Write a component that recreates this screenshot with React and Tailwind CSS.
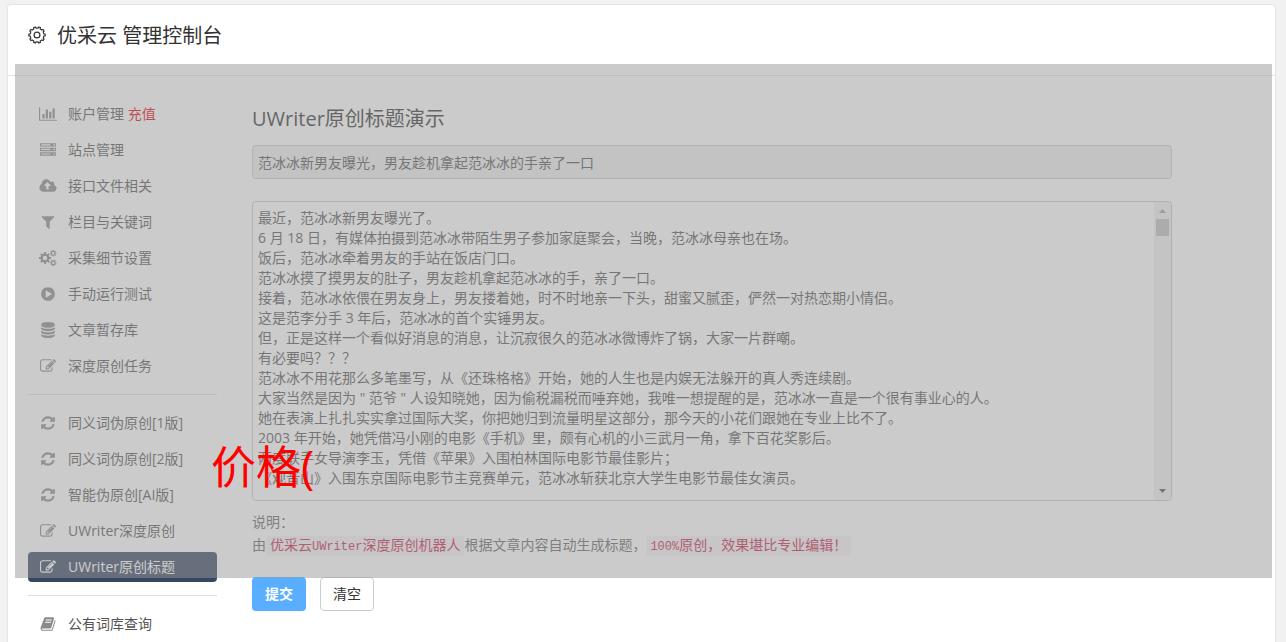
const ICONS = {
  chart: ["0 0 2048 1792", "M640 896v512h-256v-512h256zM1024 384v1024h-256v-1024h256zM2048 1536v128h-2048v-1536h128v1408h1920zM1408 640v768h-256v-768h256zM1792 256v1152h-256v-1152h256z"],
  server: ["0 0 1792 1792", "M128 1408h1024v-128h-1024v128zm0-512h1024v-128h-1024v128zm1568 448q0-40-28-68t-68-28-68 28-28 68 28 68 68 28 68-28 28-68zm-1568-960h1024v-128h-1024v128zm1568 448q0-40-28-68t-68-28-68 28-28 68 28 68 68 28 68-28 28-68zm0-512q0-40-28-68t-68-28-68 28-28 68 28 68 68 28 68-28 28-68zm96 832v384h-1792v-384h1792zm0-512v384h-1792v-384h1792zm0-512v384h-1792v-384h1792z"],
  cloud: ["-64 0 1920 1792", "M1216 864q0-14-9-23l-352-352q-9-9-23-9t-23 9l-351 351q-10 12-10 24 0 14 9 23t23 9h224v352q0 13 9.5 22.5t22.5 9.5h192q13 0 22.5-9.5t9.5-22.5v-352h224q13 0 22.5-9.5t9.5-22.5zm640 288q0 159-112.5 271.5t-271.5 112.5h-1088q-185 0-316.5-131.5t-131.5-316.5q0-130 70-240t188-165q-2-30-2-43 0-212 150-362t362-150q156 0 285.5 87t188.5 231q71-62 166-62 106 0 181 75t75 181q0 76-41 138 130 31 213.5 135.5t83.5 238.5z"],
  filter: ["0 0 1792 1792", "M1595 295q17 41-14 70l-493 493v742q0 42-39 59-13 5-25 5-27 0-45-19l-256-256q-19-19-19-45v-486l-493-493q-31-29-14-70 17-39 59-39h1280q42 0 59 39z"],
  play: ["0 0 1792 1792", "M896 128q209 0 385.5 103t279.5 279.5 103 385.5-103 385.5-279.5 279.5-385.5 103-385.5-103-279.5-279.5-103-385.5 103-385.5 279.5-279.5 385.5-103zm384 823q32-18 32-55t-32-55l-544-320q-31-19-64-1-32 19-32 56v640q0 37 32 56 16 8 32 8 17 0 32-9z"],
  database: ["0 0 1792 1792", "M896 768q237 0 443-43t325-127v170q0 69-103 128t-280 93.5-385 34.5-385-34.5-280-93.5-103-128v-170q119 84 325 127t443 43zm0 768q237 0 443-43t325-127v170q0 69-103 128t-280 93.5-385 34.5-385-34.5-280-93.5-103-128v-170q119 84 325 127t443 43zm0-384q237 0 443-43t325-127v170q0 69-103 128t-280 93.5-385 34.5-385-34.5-280-93.5-103-128v-170q119 84 325 127t443 43zm0-1152q208 0 385 34.5t280 93.5 103 128v128q0 69-103 128t-280 93.5-385 34.5-385-34.5-280-93.5-103-128v-128q0-69 103-128t280-93.5 385-34.5z"],
  edit: ["0 0 1792 1792", "M888 1184l116-116-152-152-116 116v56h96v96h56zm440-720q-16-16-33 1l-350 350q-17 17-1 33t33-1l350-350q17-17 1-33zm80 594v190q0 119-84.5 203.5t-203.5 84.5h-832q-119 0-203.5-84.5t-84.5-203.5v-832q0-119 84.5-203.5t203.5-84.5h832q63 0 117 25 15 7 18 23 3 17-9 29l-49 49q-14 14-32 8-23-6-45-6h-832q-66 0-113 47t-47 113v832q0 66 47 113t113 47h832q66 0 113-47t47-113v-126q0-13 9-22l64-64q15-15 35-7t20 29zm-96-738l288 288-672 672h-288v-288zm444 132l-92 92-288-288 92-92q28-28 68-28t68 28l152 152q28 28 28 68t-28 68z"],
  refresh: ["0 0 1792 1792", "M1639 1056q0 5-1 7-64 268-268 434.5t-478 166.5q-146 0-282.5-55t-243.5-157l-129 129q-19 19-45 19t-45-19-19-45v-448q0-26 19-45t45-19h448q26 0 45 19t19 45-19 45l-137 137q71 66 161 102t187 36q134 0 250-65t186-179q11-17 53-117 8-23 30-23h192q13 0 22.5 9.5t9.5 22.5zm25-800v448q0 26-19 45t-45 19h-448q-26 0-45-19t-19-45 19-45l138-138q-148-137-349-137-134 0-250 65t-186 179q-11 17-53 117-8 23-30 23h-199q-13 0-22.5-9.5t-9.5-22.5v-7q65-268 270-434.5t480-166.5q146 0 284 55.5t245 156.5l130-129q19-19 45-19t45 19 19 45z"],
  book: ["0 0 1792 1792", "M1703 478q40 57 18 129l-275 906q-19 64-76.5 107.5t-122.5 43.5h-923q-77 0-148.5-53.5t-99.5-131.5q-24-67-2-127 0-4 3-27t4-37q1-8-3-21.5t-3-19.5q2-11 8-21t16.5-23.5 16.5-23.5q23-38 45-91.5t30-91.5q3-10 .5-30t-.5-28q3-11 17-28t17-23q21-36 42-92t25-90q1-9-2.5-32t.5-28q4-13 22-30.5t22-22.5q19-26 42.5-84.5t27.5-96.5q1-8-3-25.5t-2-26.5q2-8 9-18t18-23 17-21q8-12 16.5-30.5t15-35 16-36 19.5-32 26.5-23.5 36-11.5 47.5 5.5l-1 3q38-9 51-9h761q74 0 114 56t18 130l-274 906q-36 119-71.5 153.5t-128.5 34.5h-869q-27 0-38 15-11 16-1 43 24 70 144 70h923q29 0 56-15.5t35-41.5l300-987q7-22 5-57 38 15 59 43zm-1064 2q-4 13 2 22.5t20 9.5h608q13 0 25.5-9.5t16.5-22.5l21-64q4-13-2-22.5t-20-9.5h-608q-13 0-25.5 9.5t-16.5 22.5zm-83 256q-4 13 2 22.5t20 9.5h608q13 0 25.5-9.5t16.5-22.5l21-64q4-13-2-22.5t-20-9.5h-608q-13 0-25.5 9.5t-16.5 22.5z"],
};

const GROUPS = [
  [
    { icon: "chart", label: "账户管理", extra: "充值" },
    { icon: "server", label: "站点管理" },
    { icon: "cloud", label: "接口文件相关" },
    { icon: "filter", label: "栏目与关键词" },
    { icon: "cogs", label: "采集细节设置" },
    { icon: "play", label: "手动运行测试" },
    { icon: "database", label: "文章暂存库" },
    { icon: "edit", label: "深度原创任务" },
  ],
  [
    { icon: "refresh", label: "同义词伪原创[1版]" },
    { icon: "refresh", label: "同义词伪原创[2版]" },
    { icon: "refresh", label: "智能伪原创[AI版]" },
    { icon: "edit", label: "UWriter深度原创" },
    { icon: "edit", label: "UWriter原创标题", active: true },
  ],
  [{ icon: "book", label: "公有词库查询" }],
];

const ARTICLE = `最近，范冰冰新男友曝光了。
6 月 18 日，有媒体拍摄到范冰冰带陌生男子参加家庭聚会，当晚，范冰冰母亲也在场。
饭后，范冰冰牵着男友的手站在饭店门口。
范冰冰摸了摸男友的肚子，男友趁机拿起范冰冰的手，亲了一口。
接着，范冰冰依偎在男友身上，男友搂着她，时不时地亲一下头，甜蜜又腻歪，俨然一对热恋期小情侣。
这是范李分手 3 年后，范冰冰的首个实锤男友。
但，正是这样一个看似好消息的消息，让沉寂很久的范冰冰微博炸了锅，大家一片群嘲。
有必要吗？？？
范冰冰不用花那么多笔墨写，从《还珠格格》开始，她的人生也是内娱无法躲开的真人秀连续剧。
大家当然是因为 " 范爷 " 人设知晓她，因为偷税漏税而唾弃她，我唯一想提醒的是，范冰冰一直是一个很有事业心的人。
她在表演上扎扎实实拿过国际大奖，你把她归到流量明星这部分，那今天的小花们跟她在专业上比不了。
2003 年开始，她凭借冯小刚的电影《手机》里，颇有心机的小三武月一角，拿下百花奖影后。
两度联手女导演李玉，凭借《苹果》入围柏林国际电影节最佳影片；
《观音山》入围东京国际电影节主竞赛单元，范冰冰斩获北京大学生电影节最佳女演员。`;

// Closed outline of a gear: a body circle with evenly spaced tapered teeth.
function gearPath(cx, cy, inner, outer, teeth) {
  const points = [];
  const step = (Math.PI * 2) / teeth;
  for (let i = 0; i < teeth; i++) {
    const a = i * step;
    [
      [inner, -0.27],
      [outer, -0.19],
      [outer, 0.19],
      [inner, 0.27],
    ].forEach(([r, t]) => {
      points.push(`${(cx + r * Math.cos(a + t * step)).toFixed(2)} ${(cy + r * Math.sin(a + t * step)).toFixed(2)}`);
    });
  }
  return `M${points.join("L")}Z`;
}

function hole(cx, cy, r) {
  return `M${cx - r} ${cy}a${r} ${r} 0 1 0 ${2 * r} 0a${r} ${r} 0 1 0 ${-2 * r} 0Z`;
}

const COGS_PATH = [
  gearPath(6, 9, 4.5, 6, 8),
  hole(6, 9, 2.2),
  gearPath(14.2, 4.2, 2.4, 3.4, 8),
  hole(14.2, 4.2, 1.2),
  gearPath(14.2, 13.8, 2.4, 3.4, 8),
  hole(14.2, 13.8, 1.2),
].join("");

function Icon({ name }) {
  if (name === "cogs") {
    return (
      <svg viewBox="0 0 18 18" className="size-[18px]" fill="currentColor" fillRule="evenodd" aria-hidden="true">
        <path d={COGS_PATH} />
      </svg>
    );
  }
  const [viewBox, d] = ICONS[name];
  const wide = name === "chart" || name === "cloud";
  return (
    <svg viewBox={viewBox} className={wide ? "h-4 w-[18px]" : "size-4"} fill="currentColor" aria-hidden="true">
      <path d={d} />
    </svg>
  );
}

function GearIcon() {
  return (
    <svg viewBox="0 0 18 18" className="size-[18px]" fill="none" stroke="currentColor" strokeWidth="1.2" strokeLinejoin="round" aria-hidden="true">
      <path d={gearPath(9, 9, 6.9, 8.2, 10)} />
      <circle cx="9" cy="9" r="2.9" />
    </svg>
  );
}

function NavItem({ icon, label, extra, active }) {
  return (
    <li>
      <a
        href="#"
        className={
          active
            ? "flex h-[30px] items-center gap-2.5 rounded bg-[#364761] pl-2.5 text-white"
            : "flex h-[30px] items-center gap-2.5 rounded pl-2.5 text-[#555]"
        }
      >
        <span className={active ? "flex w-5 justify-center" : "flex w-5 justify-center text-[#8a8a8a]"}>
          <Icon name={icon} />
        </span>
        <span>
          {label}
          {extra && <span className="text-red-600"> {extra}</span>}
        </span>
      </a>
    </li>
  );
}

function Sidebar() {
  return (
    <nav className="w-[189px] shrink-0 divide-y divide-[#ddd]">
      {GROUPS.map((items, i) => (
        <ul key={i} className="flex flex-col gap-1.5 py-[13px] first:pt-0 last:pb-0">
          {items.map((item) => (
            <NavItem key={item.label} {...item} />
          ))}
        </ul>
      ))}
    </nav>
  );
}

function ScrollTrack() {
  return (
    <div className="flex w-[17px] shrink-0 flex-col items-center rounded-r bg-[#f1f1f1]" aria-hidden="true">
      <svg viewBox="0 0 17 17" className="h-[17px] w-[17px]" fill="#a3a3a3">
        <path d="M5 11 L8.5 7 L12 11z" />
      </svg>
      <div className="h-[17px] w-[13px] bg-[#c1c1c1]" />
      <svg viewBox="0 0 17 17" className="mt-auto h-[17px] w-[17px]" fill="#505050">
        <path d="M5 6 L12 6 L8.5 10z" />
      </svg>
    </div>
  );
}

function Code({ children }) {
  return (
    <code className="rounded bg-[#f9f2f4] px-1 py-0.5 font-['Liberation_Mono','Noto_Sans_CJK_SC',monospace] text-[#c7254e]">
      {children}
    </code>
  );
}

export default function App() {
  return (
    <div className="flex min-h-screen flex-col bg-[#f1f1f1] pt-1 pr-2.5 pl-[7px] font-['Open_Sans','Noto_Sans_CJK_SC',sans-serif] text-sm text-[#333]">
      <div className="relative flex-1 rounded-t border border-b-0 border-[#e5e5e5] bg-white">
        <header className="flex h-[71px] items-center gap-[11px] border-b border-[#e5e5e5] pb-2.5 pl-5">
          <GearIcon />
          <h1 className="pt-0.5 text-xl">优采云 管理控制台</h1>
        </header>

        <div className="flex gap-[35px] pt-[23px] pl-5">
          <Sidebar />
          <main className="mr-[103px] min-w-0 flex-1 pt-1.5">
            <label htmlFor="title" className="block text-xl leading-7">
              UWriter原创标题演示
            </label>
            <input
              id="title"
              readOnly
              defaultValue="范冰冰新男友曝光，男友趁机拿起范冰冰的手亲了一口"
              className="mt-3 block h-[34px] w-full rounded border border-[#ccc] bg-[#eee] px-[5px] text-[#555] outline-none"
            />
            <div className="mt-[22px] flex rounded border border-[#ccc] bg-white">
              <textarea
                aria-label="文章内容"
                defaultValue={ARTICLE}
                className="h-[298px] min-w-0 flex-1 resize-none px-[5px] py-1.5 leading-5 text-[#555] outline-none [scrollbar-width:none]"
              />
              <ScrollTrack />
            </div>
            <p className="mt-[9px] leading-[23px] text-[#666]">
              说明：
              <br />
              由<Code>优采云<span className="text-xs">UWriter</span>深度原创机器人</Code>根据文章内容自动生成标题，
              <Code><span className="text-xs">100%</span>原创，效果堪比专业编辑！</Code>
            </p>
            <div className="mt-[19px] flex gap-3.5">
              <button type="button" className="h-[34px] w-[54px] rounded bg-[#5aaeff] font-bold text-white">
                提交
              </button>
              <button type="button" className="h-[34px] w-[54px] rounded border border-[#ccc] bg-white">
                清空
              </button>
            </div>
          </main>
        </div>

        <div className="pointer-events-none absolute top-[59px] right-[3px] left-[7px] h-[514px] bg-[#979797]/50">
          <p className="absolute top-[371px] left-[196px] text-[45px] leading-[64px] whitespace-nowrap text-[#f00]">价格(</p>
        </div>
      </div>
    </div>
  );
}
